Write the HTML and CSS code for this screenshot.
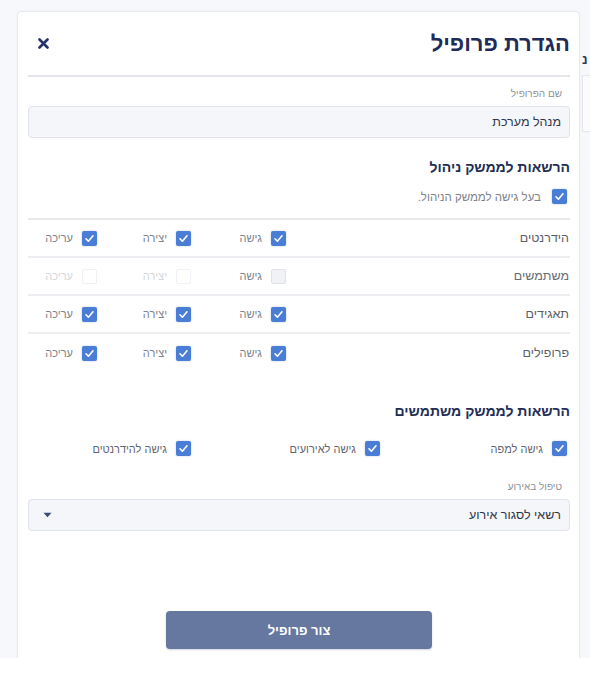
FILE: index.html
```html
<!DOCTYPE html>
<html lang="he">
<head>
<meta charset="utf-8">
<title>הגדרת פרופיל</title>
<link rel="stylesheet" href="styles.css">
</head>
<body>
<div class="app">
  <aside class="panel" dir="rtl">
    <header class="panel-header">
      <h1 class="title">הגדרת פרופיל</h1>
      <button class="close" aria-label="סגור">
        <svg width="11" height="11" viewBox="0 0 11 11"><path d="M1.5 1.5 L9.5 9.5 M9.5 1.5 L1.5 9.5" stroke="#24336a" stroke-width="2.6" stroke-linecap="round"/></svg>
      </button>
    </header>
    <div class="panel-divider"></div>

    <label class="field-label">שם הפרופיל</label>
    <div class="input">מנהל מערכת</div>

    <h2 class="section-title first">הרשאות לממשק ניהול</h2>
    <div class="check-line">
      <span class="cb checked"><svg viewBox="0 0 15 15"><polyline points="4,7.8 6.4,10.2 11,4.8"/></svg></span>
      <span class="cb-text wide">בעל גישה לממשק הניהול.</span>
    </div>

    <div class="perm-table">
      <div class="perm-row">
        <span class="perm-name">הידרנטים</span>
        <span class="perm-cell"><span class="cb checked"><svg viewBox="0 0 15 15"><polyline points="4,7.8 6.4,10.2 11,4.8"/></svg></span><span class="cb-text">גישה</span></span>
        <span class="perm-cell"><span class="cb checked"><svg viewBox="0 0 15 15"><polyline points="4,7.8 6.4,10.2 11,4.8"/></svg></span><span class="cb-text">יצירה</span></span>
        <span class="perm-cell"><span class="cb checked"><svg viewBox="0 0 15 15"><polyline points="4,7.8 6.4,10.2 11,4.8"/></svg></span><span class="cb-text">עריכה</span></span>
      </div>
      <div class="perm-row">
        <span class="perm-name">משתמשים</span>
        <span class="perm-cell"><span class="cb empty"></span><span class="cb-text">גישה</span></span>
        <span class="perm-cell disabled"><span class="cb faint"></span><span class="cb-text">יצירה</span></span>
        <span class="perm-cell disabled"><span class="cb faint"></span><span class="cb-text">עריכה</span></span>
      </div>
      <div class="perm-row">
        <span class="perm-name">תאגידים</span>
        <span class="perm-cell"><span class="cb checked"><svg viewBox="0 0 15 15"><polyline points="4,7.8 6.4,10.2 11,4.8"/></svg></span><span class="cb-text">גישה</span></span>
        <span class="perm-cell"><span class="cb checked"><svg viewBox="0 0 15 15"><polyline points="4,7.8 6.4,10.2 11,4.8"/></svg></span><span class="cb-text">יצירה</span></span>
        <span class="perm-cell"><span class="cb checked"><svg viewBox="0 0 15 15"><polyline points="4,7.8 6.4,10.2 11,4.8"/></svg></span><span class="cb-text">עריכה</span></span>
      </div>
      <div class="perm-row">
        <span class="perm-name">פרופילים</span>
        <span class="perm-cell"><span class="cb checked"><svg viewBox="0 0 15 15"><polyline points="4,7.8 6.4,10.2 11,4.8"/></svg></span><span class="cb-text">גישה</span></span>
        <span class="perm-cell"><span class="cb checked"><svg viewBox="0 0 15 15"><polyline points="4,7.8 6.4,10.2 11,4.8"/></svg></span><span class="cb-text">יצירה</span></span>
        <span class="perm-cell"><span class="cb checked"><svg viewBox="0 0 15 15"><polyline points="4,7.8 6.4,10.2 11,4.8"/></svg></span><span class="cb-text">עריכה</span></span>
      </div>
    </div>

    <h2 class="section-title second">הרשאות לממשק משתמשים</h2>
    <div class="user-perms">
      <span class="perm-cell"><span class="cb checked"><svg viewBox="0 0 15 15"><polyline points="4,7.8 6.4,10.2 11,4.8"/></svg></span><span class="cb-text dark">גישה למפה</span></span>
      <span class="perm-cell"><span class="cb checked"><svg viewBox="0 0 15 15"><polyline points="4,7.8 6.4,10.2 11,4.8"/></svg></span><span class="cb-text dark">גישה לאירועים</span></span>
      <span class="perm-cell"><span class="cb checked"><svg viewBox="0 0 15 15"><polyline points="4,7.8 6.4,10.2 11,4.8"/></svg></span><span class="cb-text dark">גישה להידרנטים</span></span>
    </div>

    <label class="field-label event-label">טיפול באירוע</label>
    <div class="input select">
      <span>רשאי לסגור אירוע</span>
      <svg class="caret" width="9" height="6" viewBox="0 0 9 6"><path d="M0.5 0.8 H8.5 L4.5 5.2 Z" fill="#3d4c77"/></svg>
    </div>

    <div class="actions">
      <button class="primary">צור פרופיל</button>
    </div>
  </aside>

  <div class="behind" dir="ltr">
    <div class="behind-head">נ</div>
    <div class="behind-box"></div>
  </div>
</div>
</body>
</html>
```

FILE: styles.css
```css
* { box-sizing: border-box; }

html, body {
  margin: 0;
  padding: 0;
  background: #ffffff;
  font-family: "Liberation Sans", "DejaVu Sans", Arial, sans-serif;
}

.app {
  display: flex;
  height: 658px;
  background: #f7f8fb;
  overflow: hidden;
}

.panel {
  margin-left: 17px;
  margin-top: 11px;
  width: 563px;
  flex: none;
  background: #ffffff;
  border: 1px solid #e7e9ef;
  border-bottom: none;
  border-radius: 5px 5px 0 0;
  padding: 0 9px 0 10px;
  display: flex;
  flex-direction: column;
  box-shadow: 0 0 3px rgba(40, 50, 90, 0.05);
}

.panel-header {
  height: 63px;
  display: flex;
  align-items: center;
  justify-content: space-between;
}

.title {
  margin: 0;
  font-size: 22px;
  font-weight: 700;
  color: #1f2b59;
  line-height: 26px;
}

.close {
  border: none;
  background: none;
  padding: 0;
  margin-left: 10px;
  width: 11px;
  height: 11px;
  display: flex;
}

.panel-divider {
  height: 2px;
  background: #e3e5ea;
}

.field-label {
  display: block;
  margin-top: 10px;
  padding-right: 8px;
  font-size: 10px;
  line-height: 14px;
  color: #8c919b;
}

.input {
  margin-top: 5px;
  height: 32px;
  background: #f5f6fa;
  border: 1px solid #e1e3ea;
  border-radius: 4px;
  padding: 0 8px;
  display: flex;
  align-items: center;
  font-size: 12.5px;
  color: #30374a;
}

.select {
  justify-content: space-between;
}

.caret {
  margin-left: 6px;
}

.section-title {
  margin: 0;
  font-size: 14px;
  font-weight: 700;
  line-height: 18px;
  color: #222d55;
}

.section-title.first { margin-top: 20px; }
.section-title.second { margin-top: 30px; }

.check-line {
  margin-top: 13px;
  display: flex;
  align-items: center;
  padding-right: 3px;
  height: 15px;
}

.cb {
  width: 15px;
  height: 15px;
  border-radius: 2px;
  flex: none;
  display: inline-flex;
}

.cb svg {
  width: 15px;
  height: 15px;
  fill: none;
  stroke: #ffffff;
  stroke-width: 1.6;
  stroke-linecap: round;
  stroke-linejoin: round;
}

.cb.checked {
  background: #4a7ed6;
  box-shadow: 0 0 2px rgba(40, 80, 160, 0.35);
}

.cb.empty {
  background: #f1f2f6;
  border: 1px solid #e0e2e8;
}

.cb.faint {
  background: #ffffff;
  border: 1px solid #f0f1f4;
}

.cb-text {
  margin-right: 9px;
  font-size: 11px;
  color: #7d828c;
  white-space: nowrap;
}

.cb-text.wide {
  margin-right: 11px;
  font-size: 11.5px;
}

.cb-text.dark {
  color: #5f646e;
}

.perm-table {
  margin-top: 14px;
  border-top: 2px solid #e7e9ed;
}

.perm-row {
  display: grid;
  grid-template-columns: 281px 95px 94px 1fr;
  align-items: center;
  height: 38px;
  padding-right: 3px;
  border-bottom: 2px solid #eceef2;
}

.perm-row:last-child {
  border-bottom: none;
}

.perm-name {
  font-size: 12.5px;
  color: #595e69;
  margin-right: -2px;
}

.perm-cell {
  display: flex;
  align-items: center;
}

.perm-row:nth-child(2) .perm-name { color: #666b75; }
.perm-cell.disabled .cb-text { color: #d3d6dc; }

.user-perms {
  margin-top: 21px;
  display: grid;
  grid-template-columns: 187px 189px 1fr;
  padding-right: 3px;
  height: 15px;
}

.event-label {
  margin-top: 24px;
}

.actions {
  margin-top: 80px;
  display: flex;
  justify-content: center;
}

.primary {
  width: 266px;
  height: 38px;
  border: none;
  border-radius: 4px;
  background: #6677a0;
  color: #ffffff;
  font-family: "Liberation Sans", "DejaVu Sans", Arial, sans-serif;
  font-size: 13px;
  font-weight: 700;
  box-shadow: 0 1px 2px rgba(30, 40, 80, 0.2);
}

.behind {
  flex: 1;
  padding-top: 53px;
  padding-left: 2px;
  overflow: hidden;
}

.behind-head {
  font-size: 13px;
  font-weight: 700;
  color: #2a3560;
  line-height: 14px;
  white-space: nowrap;
}

.behind-box {
  margin-top: 8px;
  height: 57px;
  border: 1px solid #e4e6eb;
  border-right: none;
  background: #fbfbfd;
}
```
